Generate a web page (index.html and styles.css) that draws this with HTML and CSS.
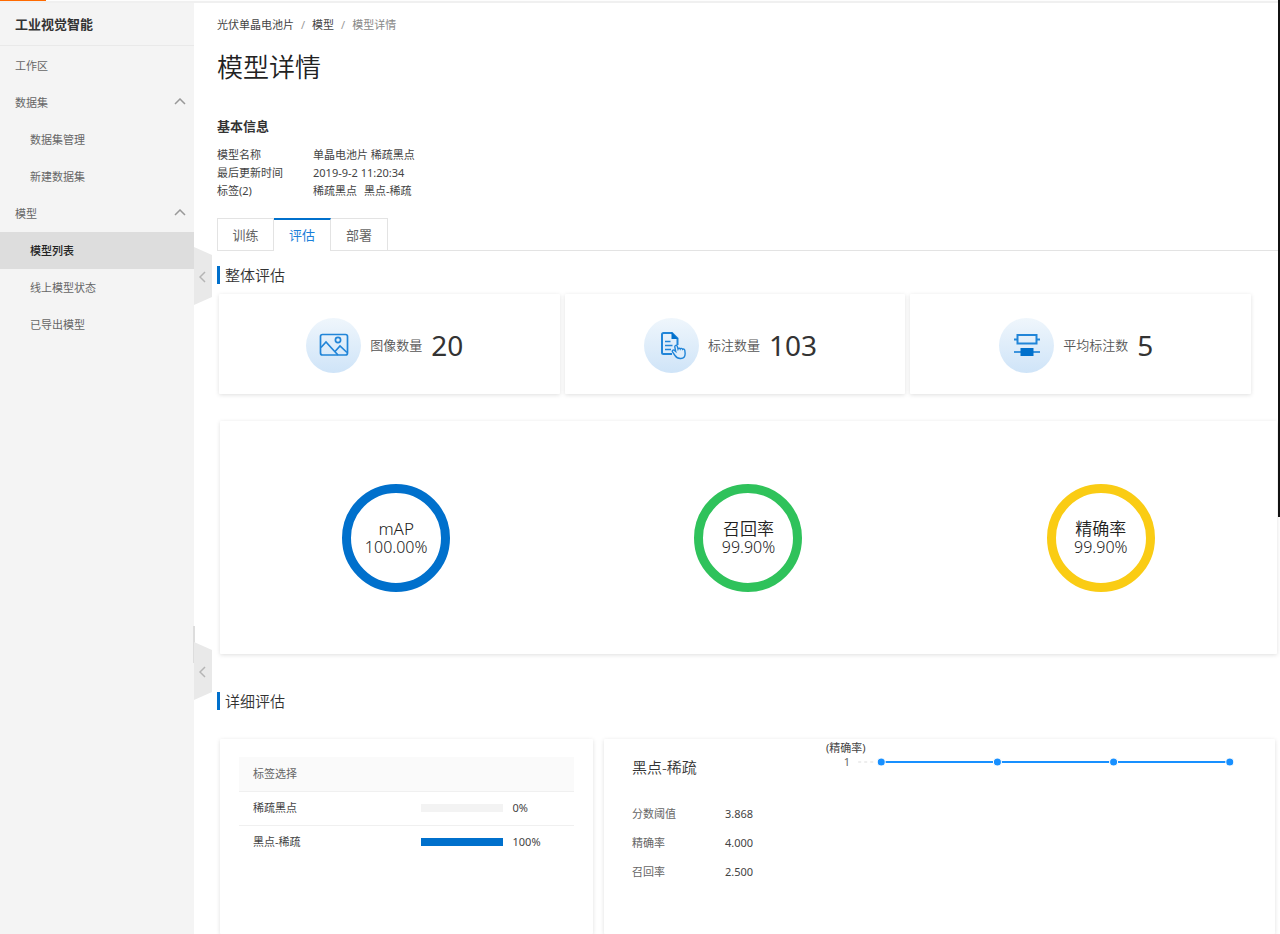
FILE: index.html
```html
<!DOCTYPE html>
<html lang="zh-CN">
<head>
<meta charset="utf-8">
<title>模型详情</title>
<link rel="stylesheet" href="styles.css">
</head>
<body>
<div class="topline"><span class="topline-mark"></span></div>
<div class="page-scroll"></div>
<div class="app">
  <aside class="sidebar">
    <div class="brand">工业视觉智能</div>
    <nav class="menu">
      <a class="menu-item" href="#">工作区</a>
      <a class="menu-item" href="#">数据集
        <svg class="chevron" viewBox="0 0 12 7"><path d="M1 6 6 1l5 5"/></svg></a>
      <a class="menu-item sub" href="#">数据集管理</a>
      <a class="menu-item sub" href="#">新建数据集</a>
      <a class="menu-item" href="#">模型
        <svg class="chevron" viewBox="0 0 12 7"><path d="M1 6 6 1l5 5"/></svg></a>
      <a class="menu-item sub active" href="#">模型列表</a>
      <a class="menu-item sub" href="#">线上模型状态</a>
      <a class="menu-item sub" href="#">已导出模型</a>
    </nav>
    <span class="side-scroll"></span>
    <button class="handle handle-upper" type="button" aria-label="收起菜单"><svg viewBox="0 0 7 12"><path d="M6 1 1 6l5 5"/></svg></button>
    <button class="handle handle-lower" type="button" aria-label="收起侧栏"><svg viewBox="0 0 7 12"><path d="M6 1 1 6l5 5"/></svg></button>
  </aside>

  <main class="main">
    <nav class="crumbs"><a href="#">光伏单晶电池片</a><span class="slash">/</span><a href="#">模型</a><span class="slash">/</span><span class="current">模型详情</span></nav>
    <h1 class="title">模型详情</h1>
    <h2 class="subtitle">基本信息</h2>
    <dl class="info">
      <dt>模型名称</dt><dd>单晶电池片 稀疏黑点</dd>
      <dt>最后更新时间</dt><dd>2019-9-2 11:20:34</dd>
      <dt>标签(2)</dt><dd><span class="tag">稀疏黑点</span><span class="tag">黑点-稀疏</span></dd>
    </dl>

    <div class="tabs">
      <button class="tab" type="button">训练</button>
      <button class="tab selected" type="button">评估</button>
      <button class="tab" type="button">部署</button>
    </div>

    <h3 class="section">整体评估</h3>
    <div class="stats">
      <div class="card stat">
        <span class="stat-icon"><svg viewBox="0 0 30 30"><rect x="1.5" y="4.5" width="27" height="20.5" rx="2"/><circle cx="19" cy="10" r="2.6"/><path d="M2 17.500 7 12l5 5.500 7 7.500M16 21.500l5-5.500 7 6.500"/></svg></span>
        <span class="stat-name">图像数量</span><span class="stat-num">20</span>
      </div>
      <div class="card stat">
        <span class="stat-icon"><svg viewBox="0 0 30 30"><path class="thick" d="M16 24H7.500A1.500 1.500 0 0 1 6 22.500v-18A1.500 1.500 0 0 1 7.500 3H16l5.500 5.500V15"/><path class="solid" d="M15.500 2v7H22z"/><path d="M9 11.500h5.500M9 15.500h7.500M9 19.500h6"/><path class="thin" d="M19 25.500 16.500 22c-.8-1.500.8-2.600 2-1.500l1.200 1-.9-4.500c-.2-1.900 2-2.300 2.500-.6l.7 2.600c.4-1 2-1 2.300 0 .5-.9 2-.8 2.300.3.900-.6 2-.1 2.200 1l.3 2.700c.2 3-1.400 5.300-4.300 5.500-2.500.2-4.300-.8-5.800-3z"/></svg></span>
        <span class="stat-name">标注数量</span><span class="stat-num">103</span>
      </div>
      <div class="card stat">
        <span class="stat-icon"><svg viewBox="0 0 30 30"><path class="thick" d="M5.500 5h19v8.500h-19z"/><path class="thick" d="M2 9.500h3.500M24.500 9.500H28"/><path d="M2 22h26"/><path class="solid" d="M8.500 18h13v8h-13z"/></svg></span>
        <span class="stat-name">平均标注数</span><span class="stat-num">5</span>
      </div>
    </div>

    <div class="card rings">
      <div class="ring-cell"><div class="ring blue"><span class="ring-name">mAP</span><span class="ring-value">100.00%</span></div></div>
      <div class="ring-cell"><div class="ring green"><span class="ring-name">召回率</span><span class="ring-value">99.90%</span></div></div>
      <div class="ring-cell"><div class="ring yellow"><span class="ring-name">精确率</span><span class="ring-value">99.90%</span></div></div>
    </div>

    <h3 class="section detail-heading">详细评估</h3>
    <div class="details">
      <div class="card labels">
        <table class="label-table">
          <thead><tr><th colspan="2">标签选择</th></tr></thead>
          <tbody>
            <tr><td>稀疏黑点</td><td><div class="rate"><span class="track"><span class="fill" style="width:0%"></span></span>0%</div></td></tr>
            <tr><td>黑点-稀疏</td><td><div class="rate"><span class="track"><span class="fill" style="width:100%"></span></span>100%</div></td></tr>
          </tbody>
        </table>
      </div>
      <div class="card result">
        <div class="summary">
          <h4 class="result-title">黑点-稀疏</h4>
          <dl class="metrics">
            <dt>分数阈值</dt><dd>3.868</dd>
            <dt>精确率</dt><dd>4.000</dd>
            <dt>召回率</dt><dd>2.500</dd>
          </dl>
        </div>
        <figure class="chart">
          <figcaption>(精确率)</figcaption>
          <div class="chart-row">
            <span class="tick">1</span>
            <svg class="plot" viewBox="0 0 380 10">
              <path class="grid-line" d="M0 5h16"/>
              <path class="series" d="M23 5h348"/>
              <g class="dots"><circle cx="23" cy="5" r="4"/><circle cx="139" cy="5" r="4"/><circle cx="255" cy="5" r="4"/><circle cx="371" cy="5" r="4"/></g>
            </svg>
          </div>
        </figure>
      </div>
    </div>
  </main>
</div>
</body>
</html>
```
FILE: styles.css
```css
* { box-sizing: border-box; }
body {
  margin: 0;
  background: #fff;
  color: #444;
  font: 11px/18px "Noto Sans", "Noto Sans CJK SC", sans-serif;
}
h1, h2, h3, h4, dl, dd, figure { margin: 0; }
a { color: inherit; text-decoration: none; }
button { margin: 0; padding: 0; font: inherit; cursor: pointer; }
svg { display: block; fill: none; }

.topline { position: absolute; z-index: 1; top: 0; left: 0; right: 0; height: 3px; background: linear-gradient(#fdfdfd 1px, #f0f0f0 1px); }
.topline-mark { display: block; width: 46px; height: 1px; background: #ff6a00; }
.page-scroll { position: absolute; z-index: 2; top: 0; right: 0; width: 2px; height: 517px; background: #111; }

.app { display: flex; min-height: 100vh; }

.sidebar { position: relative; flex: none; width: 194px; padding-top: 2px; background: #f4f4f4; }
.brand { height: 44px; padding-left: 15px; border-bottom: 1px solid #e9e9e9; color: #333; font-size: 13px; line-height: 44px; font-weight: 700; }
.menu { padding-top: 1px; }
.menu-item { display: flex; align-items: center; justify-content: space-between; height: 37px; padding: 1px 8px 0 15px; color: #666; }
.menu-item.sub { padding-left: 30px; }
.menu-item.active { background: #ddd; color: #222; font-weight: 500; }
.chevron { width: 12px; height: 7px; margin-bottom: 3px; stroke: #999; stroke-width: 1.500; }

.side-scroll { position: absolute; top: 626px; right: -1px; width: 2px; height: 37px; background: #ddd; }
.handle { position: absolute; left: 100%; width: 18px; height: 58px; border: 0; background: #e9e9e9; clip-path: polygon(0 0, 100% 8px, 100% 50px, 0 100%); }
.handle svg { width: 7px; height: 12px; margin: 2px 0 0 5px; stroke: #b5b5b5; stroke-width: 1.500; }
.handle-upper { top: 247px; }
.handle-lower { top: 642px; }

.main { display: flex; flex: 1; flex-direction: column; min-width: 0; padding: 16px 2px 0 23px; }
.crumbs { display: flex; gap: 7px; }
.slash { color: #999; }
.current { color: #888; }
.title { margin-top: 15px; color: #222; font-size: 26px; line-height: 36px; font-weight: 350; }
.subtitle { margin-top: 32px; color: #333; font-size: 13px; line-height: 18px; font-weight: 700; }
.info { display: grid; grid-template-columns: 96px 1fr; margin-top: 11px; }
.tag { margin-right: 7px; }

.tabs { display: flex; margin-top: 18px; border-bottom: 1px solid #e3e3e3; }
.tab { width: 57px; height: 32px; border: 1px solid #e3e3e3; border-width: 1px 1px 0 0; background: #fff; color: #666; font-size: 13px; }
.tab:first-child { border-left-width: 1px; }
.tab.selected { height: 33px; margin-bottom: -1px; padding-bottom: 2px; border-top: 2px solid #0070cc; color: #1a80d9; }

.section { display: flex; align-items: center; gap: 5px; margin-top: 15px; color: #333; font-size: 15px; line-height: 18px; font-weight: 350; }
.section::before { width: 3px; height: 18px; background: #0070cc; content: ""; }
.card { border-radius: 1px; background: #fff; box-shadow: 0 1px 4px rgba(0, 0, 0, .13); }

.stats { display: grid; grid-template-columns: repeat(3, 1fr); gap: 5px; margin: 10px 27px 0 2px; }
.stat { display: flex; align-items: center; justify-content: center; gap: 9px; height: 100px; padding: 2px 9px 0 0; }
.stat-icon { display: grid; place-items: center; width: 55px; height: 55px; border-radius: 50%; background: linear-gradient(#eff6fc, #cfe4f8); }
.stat-icon svg { width: 30px; height: 30px; stroke: #2185d8; stroke-width: 1.700; }
.stat-icon .thick { stroke-width: 2; }
.stat-icon .thin { stroke-width: 1.400; fill: #dfedfa; }
.stat-icon .solid { fill: #0070cc; stroke: none; }
.stat-name { color: #555; font-size: 13px; font-weight: 350; }
.stat-num { color: #333; font-size: 28px; line-height: 36px; }

.rings { display: grid; grid-template-columns: repeat(3, 1fr); align-items: center; height: 233px; margin: 27px 1px 0 3px; }
.ring-cell { display: flex; justify-content: center; }
.ring { display: flex; flex-direction: column; align-items: center; justify-content: center; width: 108px; height: 108px; border: 9px solid; border-radius: 50%; }
.ring.blue { border-color: #0070cc; }
.ring.green { border-color: #2fc25b; }
.ring.yellow { border-color: #facc14; }
.ring span { color: #222; font-size: 16px; line-height: 18px; font-weight: 350; }
.ring .ring-name { font-size: 17px; }

.detail-heading { margin-top: 38px; }
.details { display: grid; flex: 1; grid-template-columns: 373fr 671fr; gap: 11px; margin: 29px 3px 0; }
.labels { min-height: 195px; padding: 18px 19px; }
.label-table { width: 100%; border-collapse: collapse; table-layout: fixed; }
.label-table th, .label-table td { height: 34px; padding: 0 14px; text-align: left; font-weight: 400; }
.label-table th { background: #fafafa; color: #666; }
.label-table tbody tr { border-top: 1px solid #f0f0f0; }
.rate { display: flex; align-items: center; gap: 10px; }
.track { width: 82px; height: 8px; background: #f3f3f3; }
.fill { display: block; height: 100%; background: #0070cc; }

.result { display: flex; gap: 24px; padding: 0 36px 0 28px; }
.summary { flex: none; width: 170px; padding-top: 19px; }
.result-title { color: #333; font-size: 15px; line-height: 18px; font-weight: 350; }
.metrics { display: grid; grid-template-columns: 93px 1fr; margin-top: 23px; line-height: 29px; }
.metrics dt { color: #666; }
.chart { flex: 1; min-width: 0; }
.chart figcaption { line-height: 18px; }
.chart-row { display: flex; align-items: center; }
.tick { flex: none; width: 32px; padding-right: 8px; line-height: 10px; text-align: right; color: #666; }
.plot { flex: 1; min-width: 0; overflow: visible; }
.grid-line { stroke: #ddd; stroke-dasharray: 3 3; }
.series { stroke: #1890ff; stroke-width: 2; }
.dots circle { fill: #1890ff; stroke: #fff; stroke-width: 1; }
```
